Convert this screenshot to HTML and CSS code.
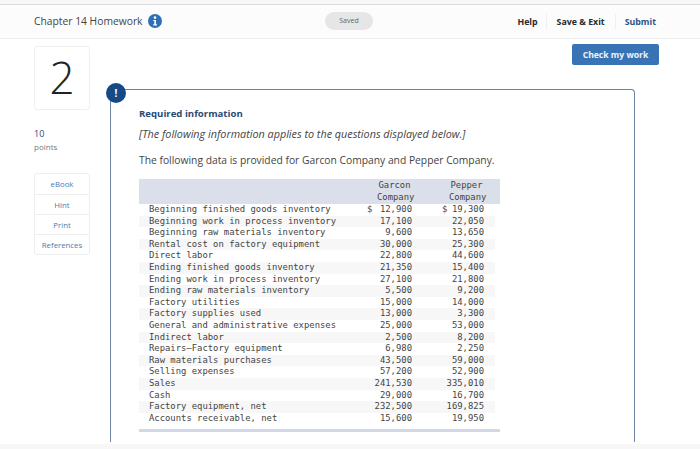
FILE: index.html
```html
<!DOCTYPE html>
<html lang="en">
<head>
<meta charset="utf-8">
<title>Chapter 14 Homework</title>
<link rel="stylesheet" href="styles.css">
</head>
<body>
<div class="page">
  <div class="topstrip"></div>
  <header class="header">
    <div class="title-group">
      <span class="title">Chapter 14 Homework</span>
      <svg class="info" viewBox="0 0 14 14" width="14" height="14" aria-hidden="true">
        <circle cx="7" cy="7" r="7" fill="#2f6fb5"/>
        <circle cx="7" cy="3.6" r="1.35" fill="#fff"/>
        <path d="M5.3 5.9H8v4.4h1v1.2H5.2v-1.2h1.1V7.1h-1z" fill="#fff"/>
      </svg>
    </div>
    <div class="saved">Saved</div>
    <nav class="nav">
      <a class="nav-item nav-help">Help</a>
      <a class="nav-item nav-save">Save &amp; Exit</a>
      <a class="nav-item nav-submit">Submit</a>
    </nav>
  </header>
  <div class="check-row"><button class="check">Check my work</button></div>
  <main class="main">
    <aside class="side">
      <div class="qnum">2</div>
      <div class="points"><div class="points-num">10</div><div class="points-label">points</div></div>
      <div class="tools">
        <div class="tool">eBook</div>
        <div class="tool">Hint</div>
        <div class="tool">Print</div>
        <div class="tool">References</div>
      </div>
    </aside>
    <section class="card">
      <div class="badge">!</div>
      <h2 class="req">Required information</h2>
      <p class="note">[The following information applies to the questions displayed below.]</p>
      <p class="intro">The following data is provided for Garcon Company and Pepper Company.</p>
      <table class="data">
        <thead>
          <tr><th class="label"></th><th class="g">Garcon<br>Company</th><th class="p">Pepper<br>Company</th></tr>
        </thead>
        <tbody>
          <tr><td class="label">Beginning finished goods inventory</td><td class="g"><span class="cur">$</span>12,900</td><td class="p"><span class="cur">$</span>19,300</td></tr>
          <tr><td class="label">Beginning work in process inventory</td><td class="g">17,100</td><td class="p">22,050</td></tr>
          <tr><td class="label">Beginning raw materials inventory</td><td class="g">9,600</td><td class="p">13,650</td></tr>
          <tr><td class="label">Rental cost on factory equipment</td><td class="g">30,000</td><td class="p">25,300</td></tr>
          <tr><td class="label">Direct labor</td><td class="g">22,800</td><td class="p">44,600</td></tr>
          <tr><td class="label">Ending finished goods inventory</td><td class="g">21,350</td><td class="p">15,400</td></tr>
          <tr><td class="label">Ending work in process inventory</td><td class="g">27,100</td><td class="p">21,800</td></tr>
          <tr><td class="label">Ending raw materials inventory</td><td class="g">5,500</td><td class="p">9,200</td></tr>
          <tr><td class="label">Factory utilities</td><td class="g">15,000</td><td class="p">14,000</td></tr>
          <tr><td class="label">Factory supplies used</td><td class="g">13,000</td><td class="p">3,300</td></tr>
          <tr><td class="label">General and administrative expenses</td><td class="g">25,000</td><td class="p">53,000</td></tr>
          <tr><td class="label">Indirect labor</td><td class="g">2,500</td><td class="p">8,200</td></tr>
          <tr><td class="label">Repairs—Factory equipment</td><td class="g">6,980</td><td class="p">2,250</td></tr>
          <tr><td class="label">Raw materials purchases</td><td class="g">43,500</td><td class="p">59,000</td></tr>
          <tr><td class="label">Selling expenses</td><td class="g">57,200</td><td class="p">52,900</td></tr>
          <tr><td class="label">Sales</td><td class="g">241,530</td><td class="p">335,010</td></tr>
          <tr><td class="label">Cash</td><td class="g">29,000</td><td class="p">16,700</td></tr>
          <tr><td class="label">Factory equipment, net</td><td class="g">232,500</td><td class="p">169,825</td></tr>
          <tr><td class="label">Accounts receivable, net</td><td class="g">15,600</td><td class="p">19,950</td></tr>
        </tbody>
      </table>
      <div class="rule"></div>
    </section>
  </main>
  <div class="bottomstrip"></div>
</div>
</body>
</html>
```
FILE: styles.css
```css
* { box-sizing: border-box; }
html, body { margin: 0; padding: 0; }
body { background: #fff; font-family: "Open Sans", Lato, sans-serif; color: #333; }
.page { position: relative; width: 700px; height: 449px; overflow: hidden; background: #fff; }
.topstrip { height: 5px; background: #f7f7f7; border-bottom: 1px solid #dcdcdc; }
.header { height: 34px; display: flex; align-items: center; justify-content: space-between; padding: 0 44px 0 34px; background: #fcfcfc; border-bottom: 1px solid #eee; position: relative; }
.title-group { display: flex; align-items: center; gap: 5px; margin-top: -2px; }
.title { font-size: 10.3px; color: #444; }
.info { display: block; }
.saved { position: absolute; left: 325px; top: 7px; width: 48px; height: 18px; border-radius: 9px; background: #e6e5e7; color: #666; font-size: 7px; line-height: 18px; text-align: center; }
.nav { display: flex; align-items: center; font-size: 8.8px; font-weight: 700; color: #2a2a2a; }
.nav-item { height: 16px; line-height: 16px; border-left: 1px solid #f0f0f0; }
.nav-help { border-left: 0; padding-right: 8px; }
.nav-save { padding: 0 10px; }
.nav-submit { color: #2c5485; padding-left: 9px; }
.check-row { height: 0; display: flex; justify-content: flex-end; padding-right: 41px; position: relative; }
.check { height: 21px; width: 87px; margin-top: 5px; flex: none; border: 0; border-radius: 2px; background: #3873b5; color: #eef3f9; font: 700 8.6px "Open Sans", sans-serif; padding: 0; }
.main { display: flex; padding: 7px 0 0 34px; }
.side { width: 56px; flex: none; }
.qnum { height: 64px; border: 1px solid #f0f0f0; border-radius: 3px; text-align: center; font-size: 44px; font-weight: 300; line-height: 60px; color: #222; }
.points { margin-top: 18px; }
.points-num { font-size: 9px; line-height: 12px; color: #2c4a75; }
.points-label { font-size: 8px; line-height: 14px; color: #777; }
.tools { margin-top: 19px; border: 1px solid #eee; border-radius: 3px; }
.tool { height: 20px; font-size: 7.8px; line-height: 20px; text-align: center; color: #4e79ad; border-top: 1px solid #f0f0f0; }
.tool:first-child { border-top: 0; }
.card { position: relative; margin: 43px 0 0 20px; width: 525px; height: 353px; border: 1px solid #6f84a3; border-bottom: 0; border-radius: 4px 4px 0 0; padding: 17px 0 0 28px; }
.badge { position: absolute; left: -5px; top: -7px; width: 20px; height: 20px; border-radius: 50%; background: #164a86; color: #fff; font-size: 10px; font-weight: 700; line-height: 20px; text-align: center; }
.req { margin: 0; font-size: 9.6px; line-height: 13px; font-weight: 700; color: #2a4a75; }
.note { margin: 7px 0 0; font-size: 10.8px; line-height: 13px; font-style: italic; color: #444; }
.intro { margin: 13px 0 0; font-size: 10.3px; line-height: 14px; color: #444; }
.data { margin-top: 12px; width: 361px; border-collapse: collapse; table-layout: fixed; font-family: "DejaVu Sans Mono", monospace; font-size: 8.9px; color: #444; }
.data th { font-weight: 400; background: #dadfea; line-height: 11.5px; padding: 0; height: 25px; }
.data td { padding: 0; height: 11.6px; line-height: 11.6px; white-space: pre; }
.data tbody tr:nth-child(even) td { background: #f7f7f8; }
.data tbody tr:nth-child(even) td.p { background: linear-gradient(#f7f7f8, #f7f7f8) 0 0 / 83px 100% no-repeat; }
th.label, td.label { width: 205px; padding-left: 10px; }
.data th.g { width: 68px; text-align: center; padding-left: 33px; }
.data th.p { width: 88px; text-align: center; padding: 0 16px 0 37px; }
td.g, td.p { text-align: right; }
.data td.p { padding-right: 16px; }
.data td.label { padding-left: 10px; }
.cur { float: left; }
td.g .cur { margin-left: 23px; }
td.p .cur { margin-left: 30px; }
.rule { width: 361px; height: 3px; margin-top: 5px; background: #d3d8e8; }
.bottomstrip { position: absolute; left: 0; right: 0; bottom: 0; height: 5px; background: #f7f7f7; }
```
